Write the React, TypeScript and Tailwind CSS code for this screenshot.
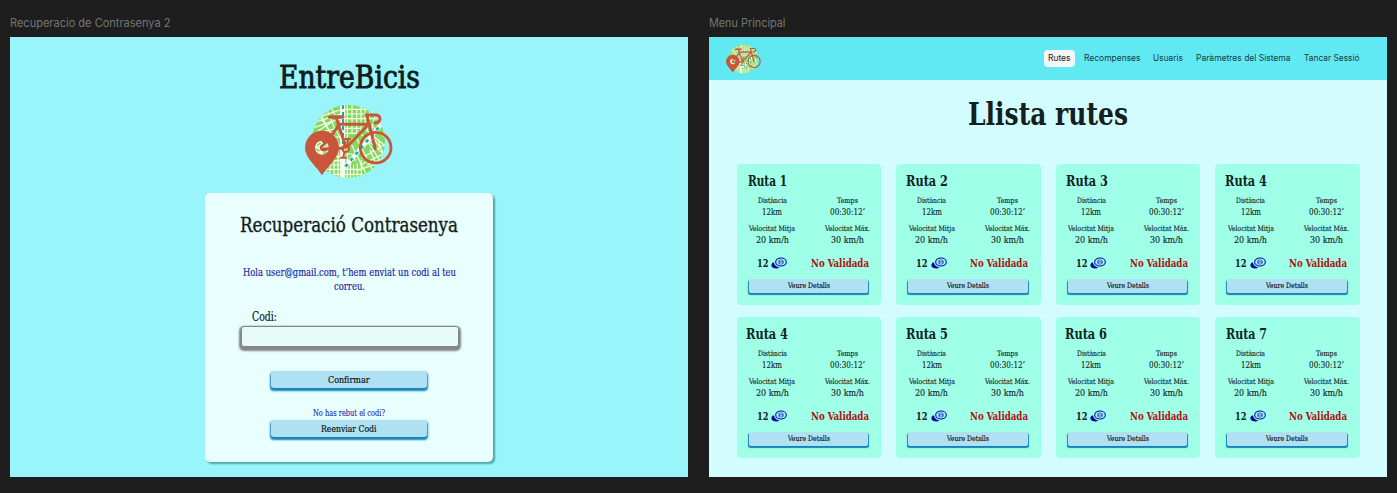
import { useId, useLayoutEffect, useRef, useState } from "react";

/** Single line of text, stretched horizontally to fill the width of its box. */
function Fit({ className, children }: { className: string; children: string }) {
  const box = useRef<HTMLSpanElement>(null);
  const line = useRef<HTMLSpanElement>(null);
  const [scale, setScale] = useState(1);
  useLayoutEffect(() => {
    if (box.current && line.current) {
      setScale(box.current.getBoundingClientRect().width / line.current.getBoundingClientRect().width);
    }
  }, [children]);
  return (
    <span ref={box} className={`block shrink-0 whitespace-nowrap ${className}`}>
      <span ref={line} className="inline-block origin-left align-top" style={{ transform: `scaleX(${scale})` }}>
        {children}
      </span>
    </span>
  );
}

function Logo({ className }: { className: string }) {
  const id = useId();
  return (
    <svg viewBox="135 162 264 225" className={className} aria-hidden="true">
      <defs>
        <clipPath id={id}>
          <circle cx="265" cy="274" r="110" />
        </clipPath>
      </defs>
      <g clipPath={`url(#${id})`} fill="none">
        <rect x="150" y="160" width="235" height="230" fill="#85da5e" />
        <g stroke="#f6fcee" strokeWidth="3.6">
          <path d="M150 210L240 180M150 236L245 205M150 222L243 192M165 175L205 240M195 165L228 245M150 255L240 232M180 190L212 250M212 170L236 216M185 176L240 164M170 246L215 216" />
          <path d="M262 160V390M276 160V250M290 180V250M303 160V245M316 160V240M256 178H330M256 192H340M256 206H370M256 235H300M256 250H290M256 268H280M256 283H275M332 165L322 240M350 175L335 240" />
          <path d="M300 250L390 330M318 240L390 300M340 232L385 270M290 265L350 385M275 285L325 385M305 325L380 280M300 345L385 305M290 362L370 335M310 375L350 362M330 300L350 345M355 270L370 320M310 290L345 262M320 345L385 320M345 345L355 375M320 270L365 340M335 256L380 322" />
          <path d="M205 320H245M205 332H245M198 345H245M190 358H300M220 373H310M210 310V390M222 300V390M234 300V390M271 335V390M281 345V390M292 340V390M304 330V390M258 330H290M258 312H278M215 245L240 290M240 260L205 265M228 240L245 270" />
        </g>
        <path d="M248 160V390" stroke="#f6fcee" strokeWidth="15" />
        <path d="M252 354L290 310L322 272L372 214" stroke="#f6fcee" strokeWidth="13" />
        <path d="M249 165V300" stroke="#16a5bb" strokeWidth="6" strokeDasharray="12 9" />
        <path d="M256 350L290 310L322 272L365 222" stroke="#16a5bb" strokeWidth="8" strokeDasharray="10 14" />
      </g>
      <g fill="none" stroke="#c8563c" strokeLinecap="round" strokeLinejoin="round">
        <circle cx="347" cy="293" r="46" strokeWidth="8.500" />
        <path d="M209 201H248" strokeWidth="11" />
        <path d="M229 204L257 290M234 223H326L261 291M236 226L205 270M320 194L346 297M225 295H250" strokeWidth="9" />
        <path d="M318 195H349Q361 197 360 208Q358 219 344 219" strokeWidth="8.500" />
        <circle cx="257" cy="296" r="10" strokeWidth="6" />
        <path d="M262 286L264 268M256 267H271M253 306L250 322M243 323H258" strokeWidth="6" />
      </g>
      <path fill="#c8563c" d="M186 376C172 350 135 325 135 293A51 51 0 0 1 237 293C237 325 200 350 186 376Z" />
      <path
        fill="#eaf8e0"
        d="M184 272A21 21 0 1 0 206 299L197 304Q181 306 179 293Q179 285 190 281Z"
      />
      <path d="M171 287L182 279M168 297L179 303M190 312L198 306" stroke="#85da5e" strokeWidth="5" />
      <path d="M186 293L202 279Q206 285 206 292Z" fill="#c9efc0" />
    </svg>
  );
}

function Coins() {
  return (
    <svg viewBox="0 0 48 36" className="h-3 w-4 shrink-0" aria-hidden="true">
      <ellipse cx="14" cy="25" rx="13" ry="9" fill="#0909a0" transform="rotate(12 14 25)" />
      <ellipse cx="29" cy="16" rx="20" ry="15.500" fill="#9cffe6" />
      <ellipse cx="30" cy="15" rx="16" ry="12" fill="#9cf6ec" stroke="#0909a0" strokeWidth="3.2" />
      <ellipse cx="30" cy="15" rx="8.500" ry="7.500" fill="#3d62cc" />
      <path d="M34 11.500Q27 9 27 12.500Q27 15 30 15Q34 16 33 18.500Q29 20 26 18" fill="none" stroke="#b4f4f4" strokeWidth="2.2" />
    </svg>
  );
}

function FormButton({ children, width }: { children: string; width: string }) {
  return (
    <button className="flex h-[17px] w-[156px] items-center justify-center rounded-[3px] bg-[#b0e1f3] text-[9.5px] leading-[17px] text-[#0b1414] shadow-[0_2px_2px_1px_#1583b8] [-webkit-text-stroke:0.2px]">
      <Fit className={width}>{children}</Fit>
    </button>
  );
}

function RecoveryScreen() {
  return (
    <section className="flex h-[440px] w-[678px] flex-col items-center bg-[#9af5fa] pt-5">
      <h1 className="text-[31px] leading-10 text-[#101c1c] [-webkit-text-stroke:0.8px]">
        <Fit className="w-[141px]">EntreBicis</Fit>
      </h1>
      <Logo className="mt-[7px] h-[75px] w-[88px]" />
      <div className="mt-[13.5px] flex h-[269.5px] w-[288px] flex-col items-center rounded-[5px] bg-[#e8fffe] pt-[18.5px] shadow-[2px_2px_2px_0px_#4ba5aa]">
        <h2 className="text-[20px] leading-7 text-[#151c1c] [-webkit-text-stroke:0.35px]">
          <Fit className="w-[218px]">Recuperació Contrasenya</Fit>
        </h2>
        <div className="mt-[27px] flex flex-col items-center text-[10.3px] leading-[13.5px] text-[#1c1ca4] [-webkit-text-stroke:0.15px]">
          <Fit className="w-[213px]">Hola user@gmail.com, t’hem enviat un codi al teu</Fit>
          <Fit className="w-[31px]">correu.</Fit>
        </div>
        <label className="mt-[16.5px] flex w-[219px] flex-col text-[12px] leading-[14px] text-[#101c1c] [-webkit-text-stroke:0.2px]">
          <Fit className="ml-[12px] w-[25px]">Codi:</Fit>
          <input className="mt-[2.5px] ml-[1.5px] h-[20.5px] w-[218px] rounded-[3px] border border-[#858585] bg-[#e7fbfb] shadow-[0_2px_2px_2px_#858585] outline-none" />
        </label>
        <div className="mt-[24px]">
          <FormButton width="w-[41.5px]">Confirmar</FormButton>
        </div>
        <p className="mt-[20.5px] text-[8.4px] leading-[10px] text-[#1c1ca4] [-webkit-text-stroke:0.1px]">
          <Fit className="w-[72px]">No has rebut el codi?</Fit>
        </p>
        <div className="mt-[2px]">
          <FormButton width="w-[55.5px]">Reenviar Codi</FormButton>
        </div>
      </div>
    </section>
  );
}

function Stat({ label, value, labelWidth, valueWidth, className }: {
  label: string;
  value: string;
  labelWidth: string;
  valueWidth: string;
  className: string;
}) {
  return (
    <div className={`flex flex-col items-center [-webkit-text-stroke:0.12px] ${className}`}>
      <span className="text-[7.5px] leading-[10px]">
        <Fit className={labelWidth}>{label}</Fit>
      </span>
      <span className="text-[8.8px] leading-[12px]">
        <Fit className={valueWidth}>{value}</Fit>
      </span>
    </div>
  );
}

function RouteCard({ name, titleClass }: { name: string; titleClass: string }) {
  return (
    <article className="h-[141px] rounded-[4px] bg-[#9fffe7] pt-[6.5px] text-[#10241f]">
      <h3 className="text-[15px] leading-5 font-bold">
        <Fit className={titleClass}>{name}</Fit>
      </h3>
      <div className="mt-[5.5px] flex gap-[30px] pl-[12.5px]">
        <Stat label="Distància" value="12km" labelWidth="w-[29px]" valueWidth="w-[20px]" className="w-[46px]" />
        <Stat label="Temps" value="00:30:12’" labelWidth="w-[21px]" valueWidth="w-[35px]" className="w-[45px]" />
      </div>
      <div className="mt-[5.5px] flex gap-[30px] pl-[12.5px]">
        <Stat label="Velocitat Mitja" value="20 km/h" labelWidth="w-[46px]" valueWidth="w-[33px]" className="w-[46px]" />
        <Stat label="Velocitat Máx." value="30 km/h" labelWidth="w-[45px]" valueWidth="w-[33px]" className="w-[45px]" />
      </div>
      <div className="mt-[9.5px] flex items-center pl-[20px] text-[11.6px] leading-4 font-bold">
        <Fit className="mr-[3px] w-[11.5px]">12</Fit>
        <Coins />
        <Fit className="ml-[23.5px] w-[58px] text-[#b00d0d]">No Validada</Fit>
      </div>
      <button className="mt-[7.5px] ml-[12px] flex h-[14px] w-[119.5px] items-center justify-center rounded-[2px] bg-[#b0e1f3] text-[7.5px] leading-[14px] text-[#0b1414] shadow-[0_1.5px_1px_0.5px_#1583b8] [-webkit-text-stroke:0.15px]">
        <Fit className="w-[42px]">Veure Detalls</Fit>
      </button>
    </article>
  );
}

const routes = [
  { name: "Ruta 1", titleClass: "ml-[11.5px] w-[39px]" },
  { name: "Ruta 2", titleClass: "ml-[9.5px] w-[42px]" },
  { name: "Ruta 3", titleClass: "ml-[10px] w-[42px]" },
  { name: "Ruta 4", titleClass: "ml-[10px] w-[42px]" },
  { name: "Ruta 4", titleClass: "ml-[9.5px] w-[42px]" },
  { name: "Ruta 5", titleClass: "ml-[10px] w-[42px]" },
  { name: "Ruta 6", titleClass: "ml-[9.5px] w-[42px]" },
  { name: "Ruta 7", titleClass: "ml-[10.5px] w-[41px]" },
];

function MenuScreen() {
  return (
    <section className="h-[440px] w-[678px] bg-[#d2fcfe]">
      <header className="flex h-[43px] items-center justify-between bg-[#60e9f3] pr-[28px] pl-[17px]">
        <Logo className="h-[30px] w-[35px]" />
        <nav className="flex items-center font-[Inter,sans-serif] text-[8.3px] leading-[17px] text-[#1c3a3c]">
          <a className="mr-[8.5px] rounded-[4px] bg-[#f4f6f6] px-[4.5px] text-[#222]">
            <Fit className="w-[22.5px]">Rutes</Fit>
          </a>
          <Fit className="mr-[13px] w-[56.5px]">Recompenses</Fit>
          <Fit className="mr-[13px] w-[30px]">Usuaris</Fit>
          <Fit className="mr-[13px] w-[94.5px]">Paràmetres del Sistema</Fit>
          <Fit className="w-[55.5px]">Tancar Sessió</Fit>
        </nav>
      </header>
      <h1 className="mt-[13.5px] flex justify-center text-[31px] leading-10 font-bold text-[#151f1f]">
        <Fit className="w-[160px]">Llista rutes</Fit>
      </h1>
      <div className="mt-[30.5px] ml-[27.5px] grid w-[623px] grid-cols-4 gap-x-[15px] gap-y-[12px]">
        {routes.map((route, i) => (
          <RouteCard key={i} {...route} />
        ))}
      </div>
    </section>
  );
}

export default function App() {
  return (
    <main className="flex h-[493px] w-[1397px] gap-[21.3px] overflow-hidden bg-[#1e1e1e] pt-[15px] pl-[10px] font-['DejaVu_Serif_Condensed','DejaVu_Serif',serif]">
      <div>
        <p className="mb-[6px] font-[Inter,sans-serif] text-[11.3px] leading-4 text-[#757575]">
          <Fit className="w-[160.5px]">Recuperacio de Contrasenya 2</Fit>
        </p>
        <RecoveryScreen />
      </div>
      <div>
        <p className="mb-[6px] font-[Inter,sans-serif] text-[11.3px] leading-4 text-[#757575]">
          <Fit className="w-[76.5px]">Menu Principal</Fit>
        </p>
        <MenuScreen />
      </div>
    </main>
  );
}
